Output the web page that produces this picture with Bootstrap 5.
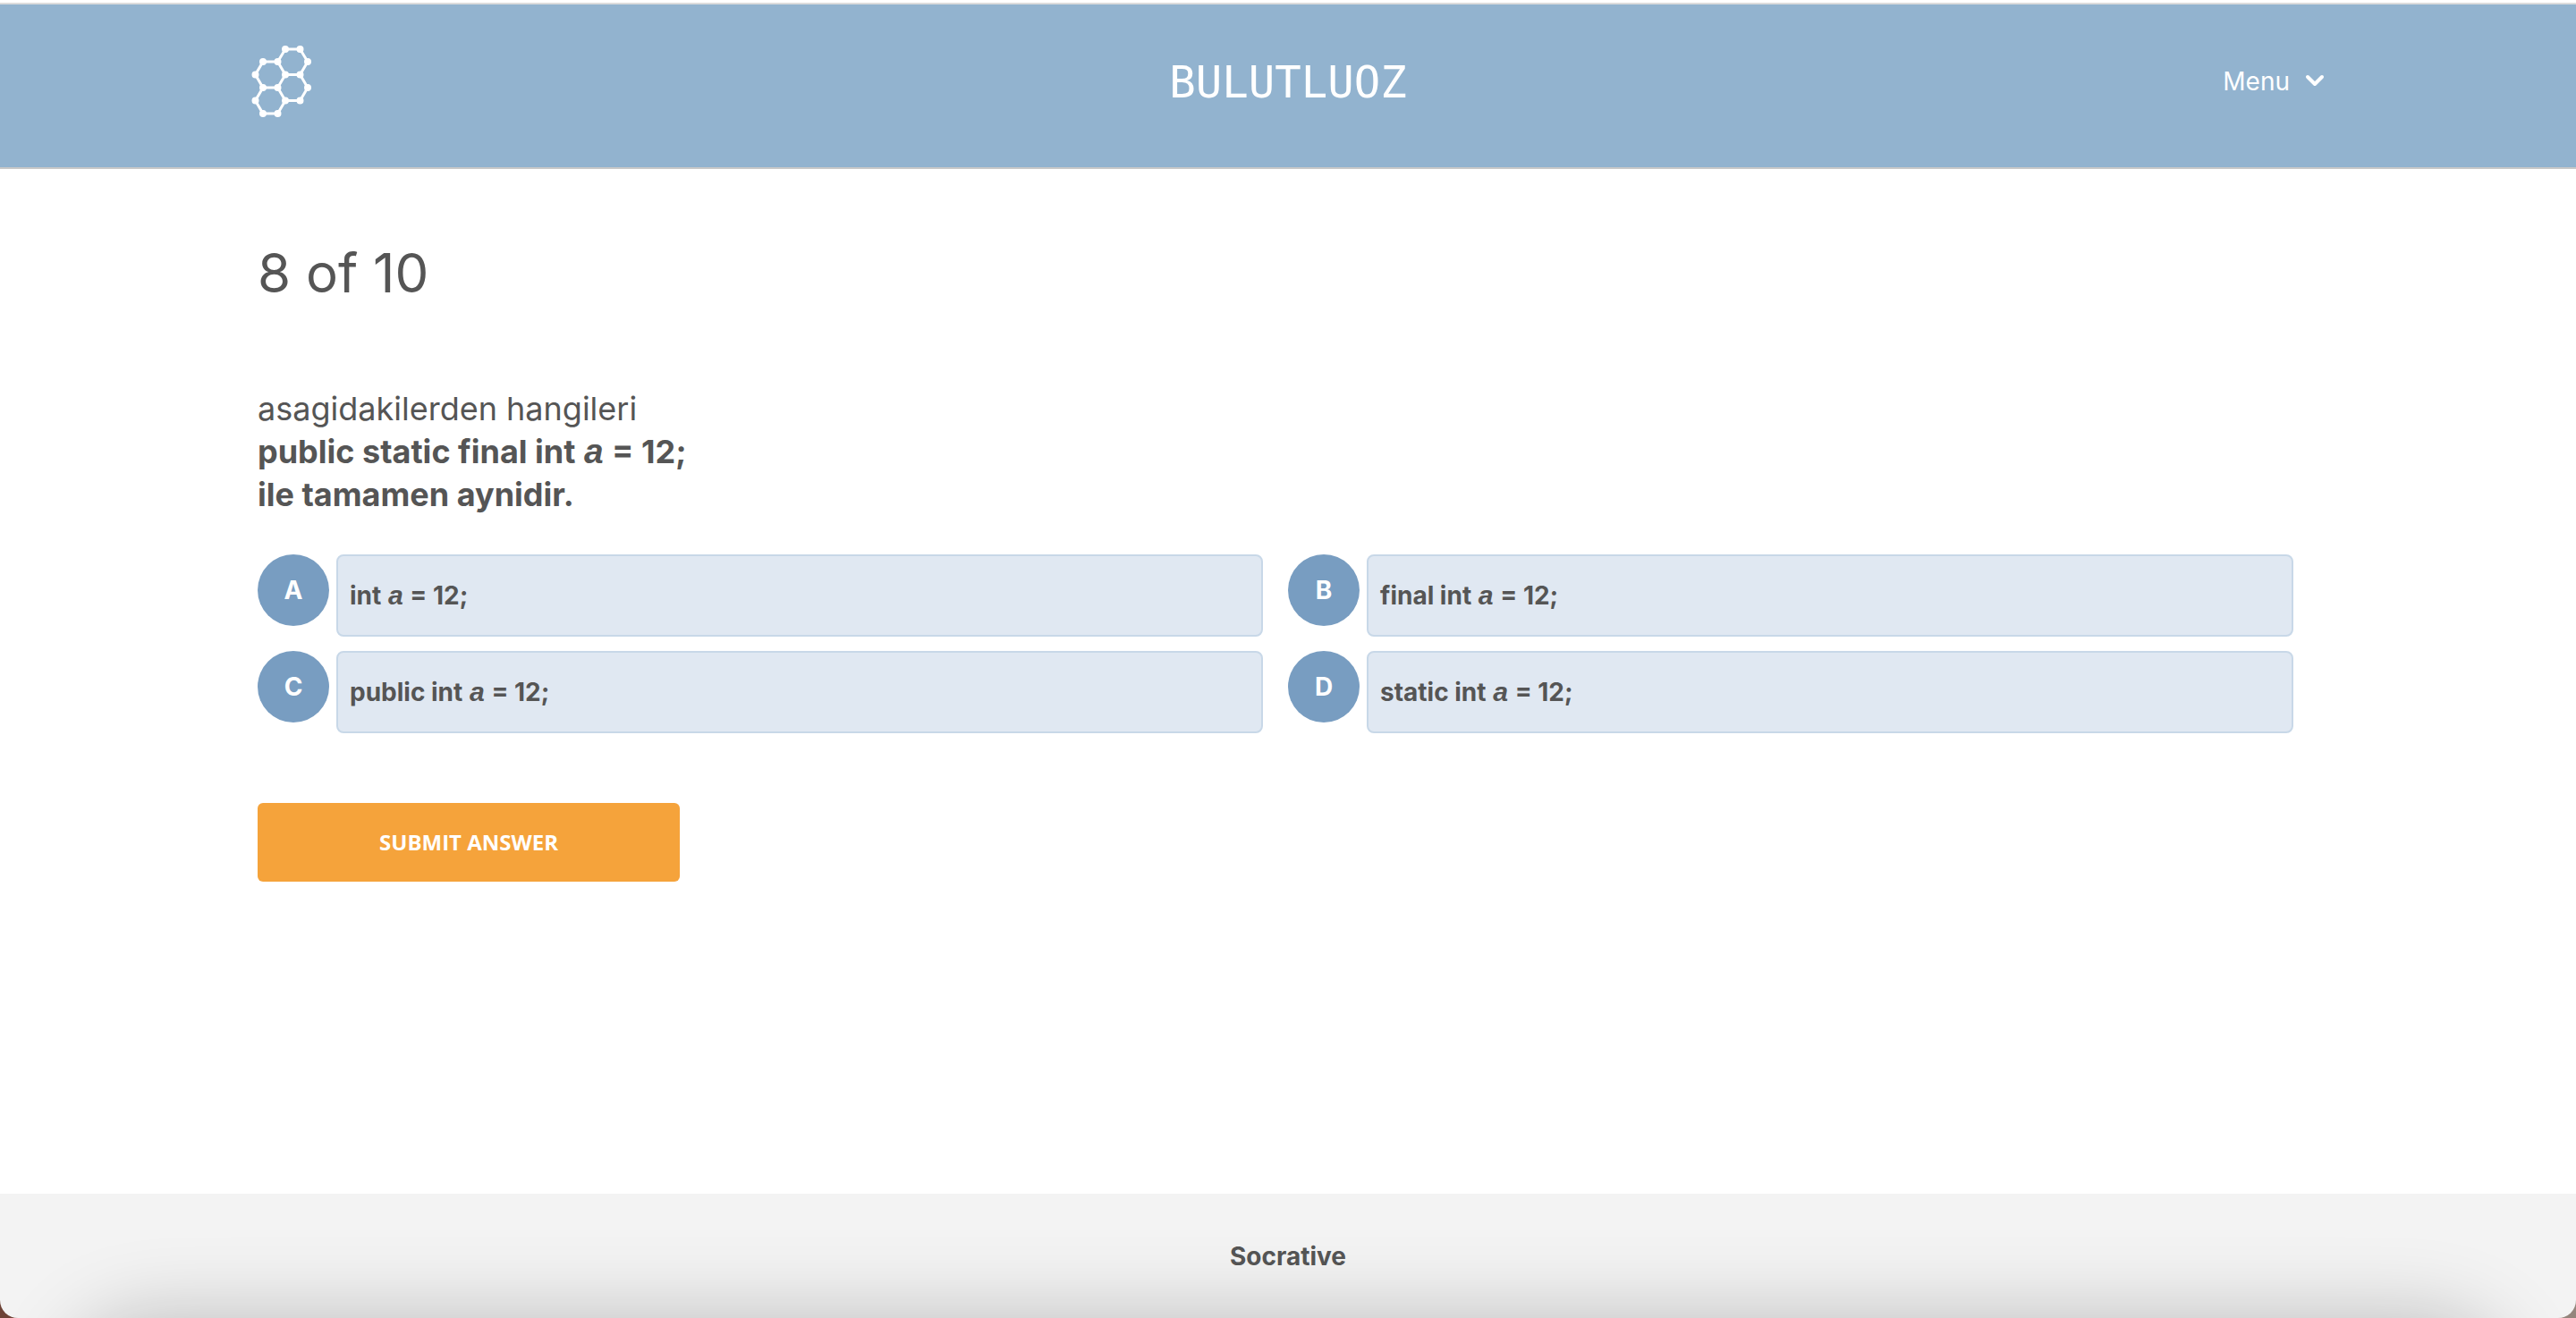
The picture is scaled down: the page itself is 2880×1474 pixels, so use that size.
<!DOCTYPE html>
<html lang="tr">
<head>
<meta charset="utf-8">
<meta name="viewport" content="width=device-width, initial-scale=1">
<title>Socrative</title>
<link href="https://cdn.jsdelivr.net/npm/bootstrap@5.3.0/dist/css/bootstrap.min.css" rel="stylesheet">
<style>
  body { font-family: Inter, "Liberation Sans", sans-serif; color: #555; background: linear-gradient(90deg, #6d4236, #94857c); }
  i { font-family: "Liberation Sans", sans-serif; font-size: 108%; line-height: 1; margin: 0 1px; }
  .page-wrap { padding-left: 10%; padding-right: 10%; }
  .window-edge { height: 5px; background: #fff; border-bottom: 2px solid #dcdcdc; }
  .top-bar { background: #92b3cf; border-bottom: 2px solid #c8c8c8; height: 184px; }
  .top-row { height: 176px; }
  .logo-link { margin-left: -8px; }
  .room-name { font-family: "DejaVu Sans Mono", monospace; font-weight: 200; font-size: 49px; line-height: 60px; }
  .menu-btn { font-size: 28px; line-height: 36px; margin-right: -8px; padding-bottom: 4px; }
  .progress-title { font-size: 60px; line-height: 72px; padding-top: 80px; margin-bottom: 92px; }
  .question-text { font-size: 36px; line-height: 48px; margin-bottom: 43px; }
  .answer-grid { row-gap: 16px; }
  .answer-btn { gap: 8px; padding-right: 28px; font-size: 28px; line-height: 36px; color: #555; }
  .answer-letter { width: 80px; height: 80px; background: #789dc1; }
  .answer-body { min-height: 92px; padding: 0 13px; background: #e0e8f2; border: 2px solid #c8d8e8; border-radius: 8px; }
  .submit-btn { width: 472px; height: 88px; margin-top: 78px; background: #f5a33b; border-radius: 6px; font-family: "Open Sans", sans-serif; font-size: 24px; line-height: 32px; }
  .site-footer { height: 139px; background: #f3f3f3; border-radius: 0 0 20px 20px; font-size: 28px; line-height: 36px; }
  .site-footer::after { content: ""; position: absolute; top: 100%; left: 76px; right: 76px; height: 180px; border-radius: 90px; box-shadow: 0 0 90px rgba(0,0,0,.23); }
</style>
<script src="https://cdn.jsdelivr.net/npm/bootstrap@5.3.0/dist/js/bootstrap.bundle.min.js"></script>
</head>
<body class="min-vh-100 d-flex flex-column">
<div class="window-edge"></div>
<header class="top-bar page-wrap text-white">
  <div class="top-row row gx-0 align-items-center">
    <div class="col">
      <a class="logo-link d-inline-block" href="#" aria-label="Socrative">
        <svg class="d-block" width="70" height="84" viewBox="280 48 70 84" fill="none" stroke="#fff" stroke-width="3">
          <path d="M319 55H335.500L344 69L335.500 83.500L344 98L335.500 112.500H319L310.500 127H294L285.500 112.500L294 98L285.500 83.500L294 69H310.500ZM310.500 69L319 83.500H335.500M319 83.500L310.500 98H294M310.500 98L319 112.500"/>
          <path stroke="#fff" stroke-width="8" stroke-linecap="round" d="M319 55h0M335.500 55h0M344 69h0M335.500 83.500h0M344 98h0M335.500 112.500h0M319 112.500h0M310.500 127h0M294 127h0M285.500 112.500h0M294 98h0M285.500 83.500h0M294 69h0M310.500 69h0M319 83.500h0M310.500 98h0"/>
        </svg>
      </a>
    </div>
    <div class="col-auto room-name">BULUTLUOZ</div>
    <div class="col d-flex justify-content-end">
      <button class="menu-btn btn border-0 pt-0 px-0 text-white d-flex align-items-center" type="button">Menu
        <svg class="ms-3" width="24" height="16" viewBox="0 0 24 16" fill="none" stroke="#fff" stroke-width="4" stroke-linecap="round" stroke-linejoin="round"><path d="M4 3L12 11L20 3"/></svg>
      </button>
    </div>
  </div>
</header>
<main class="page-wrap bg-white flex-grow-1">
  <h1 class="progress-title fw-normal">8 of 10</h1>
  <div class="question-text">asagidakilerden hangileri<br><b>public static final int <i>a</i> = 12;<br>ile tamamen aynidir.</b></div>
  <div class="answer-grid row gx-0">
    <div class="col-6"><button type="button" class="answer-btn btn border-0 py-0 ps-0 w-100 d-flex text-start fw-bold">
      <span class="answer-letter rounded-circle text-white d-flex align-items-center justify-content-center flex-shrink-0">A</span>
      <span class="answer-body flex-grow-1 d-flex align-items-center"><span>int <i>a</i> = 12;</span></span></button></div>
    <div class="col-6"><button type="button" class="answer-btn btn border-0 py-0 ps-0 w-100 d-flex text-start fw-bold">
      <span class="answer-letter rounded-circle text-white d-flex align-items-center justify-content-center flex-shrink-0">B</span>
      <span class="answer-body flex-grow-1 d-flex align-items-center"><span>final int <i>a</i> = 12;</span></span></button></div>
    <div class="col-6"><button type="button" class="answer-btn btn border-0 py-0 ps-0 w-100 d-flex text-start fw-bold">
      <span class="answer-letter rounded-circle text-white d-flex align-items-center justify-content-center flex-shrink-0">C</span>
      <span class="answer-body flex-grow-1 d-flex align-items-center"><span>public int <i>a</i> = 12;</span></span></button></div>
    <div class="col-6"><button type="button" class="answer-btn btn border-0 py-0 ps-0 w-100 d-flex text-start fw-bold">
      <span class="answer-letter rounded-circle text-white d-flex align-items-center justify-content-center flex-shrink-0">D</span>
      <span class="answer-body flex-grow-1 d-flex align-items-center"><span>static int <i>a</i> = 12;</span></span></button></div>
  </div>
  <button type="submit" class="submit-btn btn border-0 text-white fw-bold">SUBMIT ANSWER</button>
</main>
<footer class="site-footer position-relative overflow-hidden d-flex align-items-center justify-content-center fw-bold">Socrative</footer>
</body>
</html>
